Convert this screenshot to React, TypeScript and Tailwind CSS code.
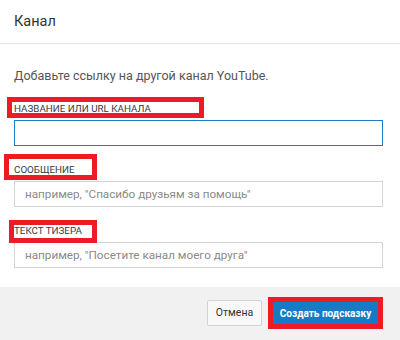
const fields = [
  { label: "Название или URL канала", placeholder: "", focused: true },
  { label: "Сообщение", placeholder: 'например, "Спасибо друзьям за помощь"', focused: false },
  { label: "Текст тизера", placeholder: 'например, "Посетите канал моего друга"', focused: false },
];

// red annotation frames drawn over the screenshot
const marks = [
  "left-[7px] top-[97px] w-[197px] h-[21px]",
  "left-[4px] top-[154px] w-[93px] h-[26px]",
  "left-[9px] top-[220px] w-[88px] h-[23px]",
];

export default function App() {
  return (
    <div className="relative w-[400px] h-[340px] bg-white font-['Roboto',sans-serif] overflow-hidden">
      <div className="h-[44px] flex items-center px-[14px] border-b border-[#e3e3e3] text-[14.5px] text-[#333]">
        Канал
      </div>

      <div className="px-[14px] pt-[24px] pb-[19px]">
        <p className="text-[12.5px] leading-[16px] text-[#555]">
          Добавьте ссылку на другой канал YouTube.
        </p>

        <div className="mt-[19px] flex flex-col gap-[18px]">
          {fields.map((f) => (
            <div key={f.label}>
              <div className="text-[9.8px] leading-[12px] uppercase text-[#3a3a3a] mb-[5px]">
                {f.label}
              </div>
              <input
                className={`block w-[369px] h-[26px] px-[10px] text-[11.7px] text-[#333] placeholder:text-[#8a8a8a] outline-none border ${
                  f.focused ? "border-[#1c7bd0]" : "border-[#d3d3d3]"
                }`}
                placeholder={f.placeholder}
              />
            </div>
          ))}
        </div>
      </div>

      <div className="h-[53px] bg-[#f1f1f1] flex items-start justify-end gap-[8px] pt-[13px] pr-[19px]">
        <button className="h-[26px] w-[55px] border border-[#d3d3d3] bg-[#f8f8f8] text-[10.5px] text-[#333] rounded-[2px]">
          Отмена
        </button>
        <div className="relative">
          <button className="h-[26px] w-[111px] bg-[#167ac6] text-white text-[10px] font-bold rounded-[2px]">
            Создать подсказку
          </button>
          <div className="absolute -left-[2px] -right-[2px] -top-[3px] -bottom-[2px] border-[5px] border-[#ed1c24]" />
        </div>
      </div>

      {marks.map((m) => (
        <div key={m} className={`absolute ${m} border-[5px] border-[#ed1c24] pointer-events-none`} />
      ))}
    </div>
  );
}
